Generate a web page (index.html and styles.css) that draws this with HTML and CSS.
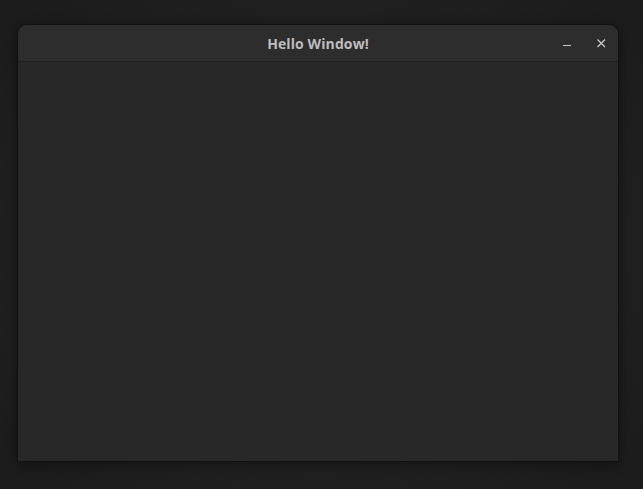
FILE: index.html
```html
<!DOCTYPE html>
<html>
<head>
<meta charset="utf-8">
<link rel="stylesheet" href="styles.css">
</head>
<body>
<div class="desktop">
  <div class="window">
    <div class="titlebar">
      <div class="title">Hello Window!</div>
      <div class="controls">
        <span class="btn min"><svg width="12" height="12" viewBox="0 0 12 12"><path d="M1 8.5h8" stroke="#c8c8c8" stroke-width="1.2"/></svg></span>
        <span class="btn close"><svg width="12" height="12" viewBox="0 0 12 12"><path d="M1.5 2.5l7.5 7.5M9 2.5l-7.5 7.5" stroke="#c8c8c8" stroke-width="1.3"/></svg></span>
      </div>
    </div>
    <div class="content"></div>
  </div>
</div>
</body>
</html>
```
FILE: styles.css
```css
html, body {
  margin: 0;
  padding: 0;
  background: #1e1e1e;
  width: 643px;
  height: 489px;
  overflow: hidden;
}
.desktop {
  padding: 24px 0 0 17px;
  background: radial-gradient(ellipse at center, #202020 60%, #1b1b1b 100%);
  height: 489px;
  box-sizing: border-box;
}
.window {
  width: 602px;
  height: 438px;
  box-sizing: border-box;
  border: 1px solid #111;
  border-radius: 10px 10px 0 0;
  background: #282828;
  display: flex;
  flex-direction: column;
  overflow: hidden;
  box-shadow: 0 2px 12px rgba(0,0,0,0.45);
}
.titlebar {
  height: 36px;
  flex: none;
  background: #2d2d2d;
  border-bottom: 1px solid #1f1f1f;
  position: relative;
  display: flex;
  align-items: center;
  justify-content: center;
}
.title {
  font-family: "Open Sans", "DejaVu Sans", sans-serif;
  font-weight: 700;
  font-size: 14px;
  color: #bdbdbd;
  letter-spacing: 0.1px;
}
.controls {
  position: absolute;
  right: 10px;
  top: 12px;
  display: flex;
  gap: 22px;
}
.btn {
  width: 12px;
  height: 12px;
  display: block;
}
.btn svg { display: block; }
.content {
  flex: 1;
  background: #282828;
}
```
